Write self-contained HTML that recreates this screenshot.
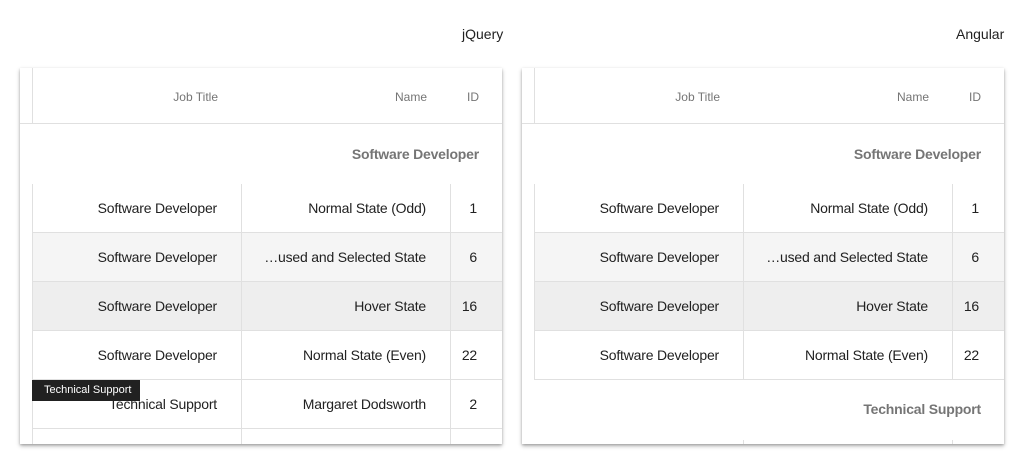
<!DOCTYPE html>
<html><head><meta charset="utf-8"><style>
*{margin:0;padding:0;box-sizing:border-box}
body{width:1024px;height:464px;background:#fff;font-family:"Liberation Sans",sans-serif;position:relative;overflow:hidden;color:#212121}
.t{position:absolute;font-size:14px;top:26px}
.card{position:absolute;top:68px;width:482px;height:376px;background:#fff;box-shadow:0 2px 4px rgba(0,0,0,.3),0 1px 2px rgba(0,0,0,.15);overflow:hidden}
.a{position:absolute}
.h{font-size:12px;color:#757575;text-align:right}
.c{font-size:14px;color:#212121;text-align:right;line-height:48px;letter-spacing:-0.2px}
.g{font-size:14px;font-weight:bold;color:#757575;text-align:right;letter-spacing:-0.2px}
.vl{position:absolute;width:1px;background:#e0e0e0}
.hl{position:absolute;height:1px;background:#e0e0e0}
</style></head><body>
<div class="t" style="left:462px">jQuery</div>
<div class="t" style="left:956px">Angular</div>

<!-- jQuery card -->
<div class="card" style="left:20px">
 <div class="vl" style="left:12px;top:0;height:55px"></div>
 <div class="a h" style="left:0;width:198px;top:22px">Job Title</div>
 <div class="a h" style="left:0;width:407px;top:22px">Name</div>
 <div class="a h" style="left:0;width:459px;top:22px">ID</div>
 <div class="hl" style="left:0;width:482px;top:55px"></div>
 <div class="a g" style="left:0;width:459px;top:78px">Software Developer</div>
 <div class="a" style="left:12px;top:165px;width:470px;height:48px;background:#f5f5f5"></div>
 <div class="a" style="left:12px;top:214px;width:470px;height:48px;background:#eeeeee"></div>
 <div class="vl" style="left:12px;top:116px;height:260px"></div>
 <div class="vl" style="left:221px;top:116px;height:260px"></div>
 <div class="vl" style="left:430px;top:116px;height:260px"></div>
 <div class="hl" style="left:12px;width:470px;top:164px"></div>
 <div class="hl" style="left:12px;width:470px;top:213px"></div>
 <div class="hl" style="left:12px;width:470px;top:262px"></div>
 <div class="hl" style="left:12px;width:470px;top:311px"></div>
 <div class="hl" style="left:12px;width:470px;top:360px"></div>
 <div class="a c" style="left:0;width:197px;top:116px">Software Developer</div>
 <div class="a c" style="left:0;width:406px;top:116px">Normal State (Odd)</div>
 <div class="a c" style="left:0;width:457px;top:116px">1</div>
 <div class="a c" style="left:0;width:197px;top:165px">Software Developer</div>
 <div class="a c" style="left:0;width:406px;top:165px">…used and Selected State</div>
 <div class="a c" style="left:0;width:457px;top:165px">6</div>
 <div class="a c" style="left:0;width:197px;top:214px">Software Developer</div>
 <div class="a c" style="left:0;width:406px;top:214px">Hover State</div>
 <div class="a c" style="left:0;width:457px;top:214px">16</div>
 <div class="a c" style="left:0;width:197px;top:263px">Software Developer</div>
 <div class="a c" style="left:0;width:406px;top:263px">Normal State (Even)</div>
 <div class="a c" style="left:0;width:457px;top:263px">22</div>
 <div class="a c" style="left:0;width:197px;top:312px">Technical Support</div>
 <div class="a c" style="left:0;width:406px;top:312px">Margaret Dodsworth</div>
 <div class="a c" style="left:0;width:457px;top:312px">2</div>
 <div class="a" style="left:12px;top:312px;width:108px;height:21px;background:#212121;color:#fff;font-size:11px;line-height:21px;padding-left:12px">Technical Support</div>
</div>

<!-- Angular card -->
<div class="card" style="left:522px">
 <div class="vl" style="left:12px;top:0;height:55px"></div>
 <div class="a h" style="left:0;width:198px;top:22px">Job Title</div>
 <div class="a h" style="left:0;width:407px;top:22px">Name</div>
 <div class="a h" style="left:0;width:459px;top:22px">ID</div>
 <div class="hl" style="left:0;width:482px;top:55px"></div>
 <div class="a g" style="left:0;width:459px;top:78px">Software Developer</div>
 <div class="a" style="left:12px;top:165px;width:470px;height:48px;background:#f5f5f5"></div>
 <div class="a" style="left:12px;top:214px;width:470px;height:48px;background:#eeeeee"></div>
 <div class="vl" style="left:12px;top:116px;height:195px"></div>
 <div class="vl" style="left:221px;top:116px;height:195px"></div>
 <div class="vl" style="left:430px;top:116px;height:195px"></div>
 <div class="vl" style="left:221px;top:372px;height:4px"></div>
 <div class="vl" style="left:430px;top:372px;height:4px"></div>
 <div class="hl" style="left:12px;width:470px;top:164px"></div>
 <div class="hl" style="left:12px;width:470px;top:213px"></div>
 <div class="hl" style="left:12px;width:470px;top:262px"></div>
 <div class="hl" style="left:12px;width:470px;top:311px"></div>
 <div class="a c" style="left:0;width:197px;top:116px">Software Developer</div>
 <div class="a c" style="left:0;width:406px;top:116px">Normal State (Odd)</div>
 <div class="a c" style="left:0;width:457px;top:116px">1</div>
 <div class="a c" style="left:0;width:197px;top:165px">Software Developer</div>
 <div class="a c" style="left:0;width:406px;top:165px">…used and Selected State</div>
 <div class="a c" style="left:0;width:457px;top:165px">6</div>
 <div class="a c" style="left:0;width:197px;top:214px">Software Developer</div>
 <div class="a c" style="left:0;width:406px;top:214px">Hover State</div>
 <div class="a c" style="left:0;width:457px;top:214px">16</div>
 <div class="a c" style="left:0;width:197px;top:263px">Software Developer</div>
 <div class="a c" style="left:0;width:406px;top:263px">Normal State (Even)</div>
 <div class="a c" style="left:0;width:457px;top:263px">22</div>
 <div class="a g" style="left:0;width:459px;top:333px">Technical Support</div>
</div>
</body></html>
